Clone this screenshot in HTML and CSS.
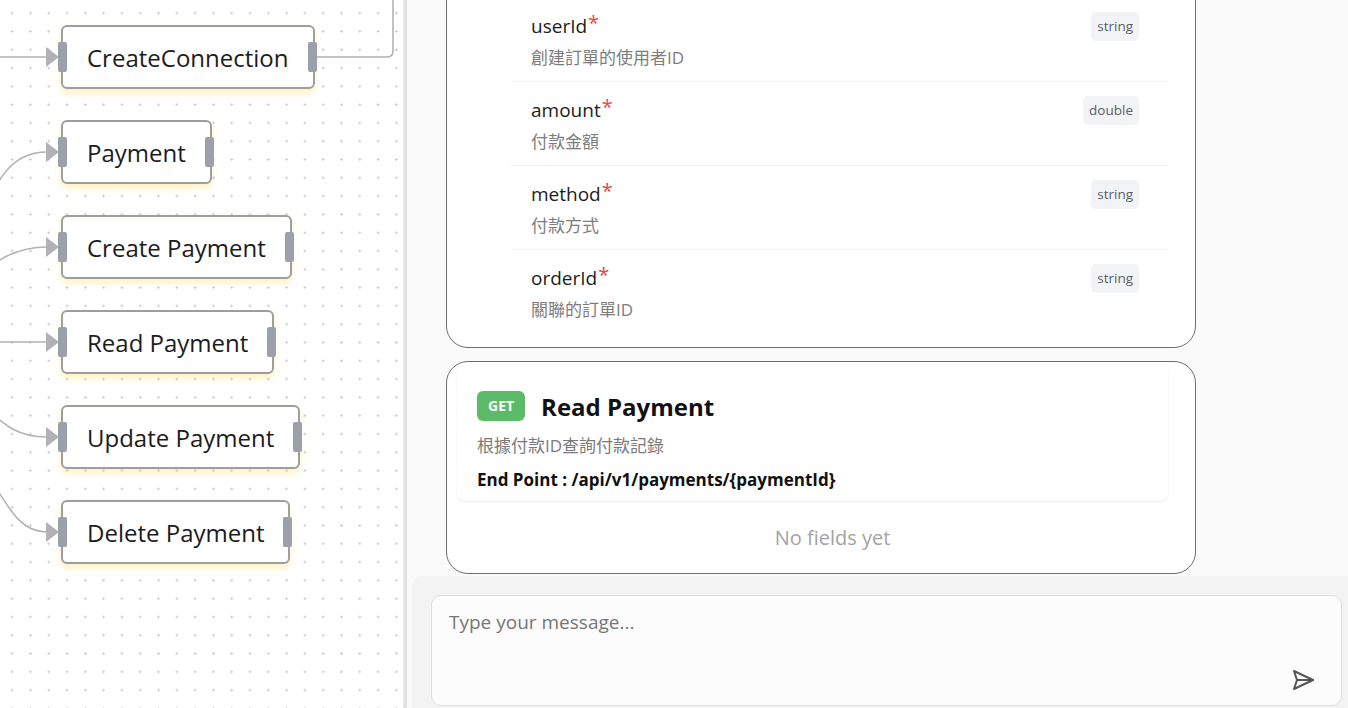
FILE: index.html
```html
<!DOCTYPE html>
<html>

	<head>
		<meta charset="UTF-8">
		<title>API Flow</title>
		<link rel="stylesheet" href="styles.css">
	</head>

	<body>
		<div class="app">
			<div class="canvas">
				<svg class="edges" width="403" height="708" viewBox="0 0 403 708">
					<g fill="none" stroke="#b1b1b7" stroke-width="1.6">
						<path d="M0 57 L47 57" />
						<path d="M315 57 L387 57 Q393 57 393 51 L393 -10" />
						<path d="M-25 235 C-5 180, 10 152, 47 152" />
						<path d="M-40 290 C-5 260, 15 247, 47 247" />
						<path d="M0 342 L47 342" />
						<path d="M-30 395 C5 425, 15 437, 47 437" />
						<path d="M-15 470 C10 510, 20 532, 47 532" />
					</g>
					<g fill="#b1b1b7">
						<polygon points="46,47 59,57 46,67" />
						<polygon points="46,142 59,152 46,162" />
						<polygon points="46,237 59,247 46,257" />
						<polygon points="46,332 59,342 46,352" />
						<polygon points="46,427 59,437 46,447" />
						<polygon points="46,522 59,532 46,542" />
					</g>
				</svg>
				<div class="nodes">
					<div class="node"><span class="handle left"></span>CreateConnection<span class="handle right"></span></div>
					<div class="node"><span class="handle left"></span>Payment<span class="handle right"></span></div>
					<div class="node"><span class="handle left"></span>Create Payment<span class="handle right"></span></div>
					<div class="node"><span class="handle left"></span>Read Payment<span class="handle right"></span></div>
					<div class="node"><span class="handle left"></span>Update Payment<span class="handle right"></span></div>
					<div class="node"><span class="handle left"></span>Delete Payment<span class="handle right"></span></div>
				</div>
			</div>
			<div class="divider"></div>
			<div class="panel">
				<div class="messages">
					<div class="api-card fields-card">
						<ul class="fields">
							<li>
								<div>
									<div class="field-name">userId<span class="req">*</span></div>
									<div class="field-desc">創建訂單的使用者ID</div>
								</div>
								<span class="type">string</span>
							</li>
							<li>
								<div>
									<div class="field-name">amount<span class="req">*</span></div>
									<div class="field-desc">付款金額</div>
								</div>
								<span class="type">double</span>
							</li>
							<li>
								<div>
									<div class="field-name">method<span class="req">*</span></div>
									<div class="field-desc">付款方式</div>
								</div>
								<span class="type">string</span>
							</li>
							<li>
								<div>
									<div class="field-name">orderId<span class="req">*</span></div>
									<div class="field-desc">關聯的訂單ID</div>
								</div>
								<span class="type">string</span>
							</li>
						</ul>
					</div>
					<div class="api-card">
						<div class="api-head">
							<div class="api-title">
								<span class="method get">GET</span>
								<h2>Read Payment</h2>
							</div>
							<p class="api-desc">根據付款ID查詢付款記錄</p>
							<p class="api-endpoint">End Point : /api/v1/payments/{paymentId}</p>
						</div>
						<div class="empty">No fields yet</div>
					</div>
				</div>
				<div class="composer">
					<div class="input-box">
						<span class="placeholder">Type your message...</span>
						<button class="send" type="button">
							<svg width="24" height="24" viewBox="0 0 24 24" fill="none" stroke="#555" stroke-width="2" stroke-linecap="round" stroke-linejoin="round">
								<path d="m3 3 3 9-3 9 19-9Z" />
								<path d="M6 12h16" />
							</svg>
						</button>
					</div>
				</div>
			</div>
		</div>
	</body>

</html>
```

FILE: styles.css
```css
* {
	margin: 0;
	padding: 0;
	box-sizing: border-box;
}

body {
	width: 1348px;
	height: 708px;
	overflow: hidden;
	font-family: "Open Sans", "Noto Sans CJK TC", sans-serif;
	color: #1c1c1c;
	background: #fafafa;
}

.app {
	display: flex;
	height: 708px;
}

/* flow canvas */

.canvas {
	position: relative;
	width: 403px;
	flex-shrink: 0;
	background-color: #fff;
	background-image: radial-gradient(circle, #c6c6c6 0.9px, transparent 1.3px);
	background-size: 18.3px 18.3px;
	background-position: 3px 4px;
	overflow: hidden;
}

.edges {
	position: absolute;
	left: 0;
	top: 0;
}

.nodes {
	position: relative;
	display: flex;
	flex-direction: column;
	align-items: flex-start;
	gap: 31px;
	padding: 25px 0 0 61px;
}

.node {
	position: relative;
	height: 64px;
	display: flex;
	align-items: center;
	padding: 0 24px;
	background: #fff;
	border: 2px solid #9e9e9e;
	border-radius: 6px;
	box-shadow: 0 4px 7px rgba(250, 204, 21, 0.28);
	font-size: 24px;
	white-space: nowrap;
}

.handle {
	position: absolute;
	top: 15px;
	width: 9px;
	height: 30px;
	background: #9ba1ab;
	border-radius: 2px;
}

.handle.left {
	left: -5px;
}

.handle.right {
	right: -4px;
}

.divider {
	width: 4px;
	flex-shrink: 0;
	background: linear-gradient(to right, #e9e9e9, #dcdcdc);
}

/* right panel */

.panel {
	flex: 1;
	display: flex;
	flex-direction: column;
	min-width: 0;
}

.messages {
	flex: 1;
	display: flex;
	flex-direction: column;
	justify-content: flex-end;
	gap: 13px;
	padding: 0 0 2px 39px;
	overflow: hidden;
}

.api-card {
	width: 750px;
	flex-shrink: 0;
	padding: 0 27px 0 10px;
	background: #fff;
	border: 1px solid #6e6e6e;
	border-radius: 22px;
}

.fields-card {
	padding-top: 40px;
	padding-bottom: 14px;
}

.api-head {
	padding: 29px 20px 9px 20px;
	border-radius: 8px;
	box-shadow: 0 1px 2px rgba(0, 0, 0, 0.08);
}

.api-title {
	display: flex;
	align-items: center;
	gap: 16px;
	height: 30px;
}

.method {
	display: inline-block;
	height: 30px;
	padding: 0 11px;
	border-radius: 6px;
	color: #fff;
	font-size: 14px;
	font-weight: 700;
	line-height: 30px;
}

.method.get {
	background: #5cbb67;
}

.api-title h2 {
	font-size: 24px;
	font-weight: 700;
	color: #111;
}

.api-desc {
	margin-top: 13px;
	font-size: 17px;
	line-height: 24px;
	color: #7a7a7a;
}

.api-endpoint {
	margin-top: 10px;
	font-size: 17px;
	line-height: 24px;
	font-weight: 700;
	color: #111;
}

.fields {
	list-style: none;
	margin-left: 54px;
}

.fields li {
	display: flex;
	justify-content: space-between;
	align-items: flex-start;
	padding: 14px 29px 11px 20px;
	border-top: 1px solid #efefef;
}

.field-name {
	font-size: 19px;
	line-height: 28px;
	font-weight: 500;
	color: #1c1c1c;
}

.req {
	margin-left: 1px;
	color: #e5484d;
	font-size: 20px;
	position: relative;
	top: -3px;
}

.field-desc {
	margin-top: 6px;
	font-size: 17px;
	line-height: 24px;
	color: #7d7d7d;
}

.type {
	height: 29px;
	padding: 0 6px;
	border-radius: 5px;
	background: #f2f3f5;
	color: #5b5f66;
	font-size: 13.5px;
	line-height: 29px;
}

.empty {
	padding: 23px 0 21px 40px;
	text-align: center;
	font-size: 20px;
	line-height: 28px;
	color: #a3a3a3;
}

/* message input */

.composer {
	height: 132px;
	flex-shrink: 0;
	margin-left: 5px;
	padding: 19px 6px 2px 19px;
	background: #f3f3f3;
	border-top-left-radius: 10px;
}

.input-box {
	height: 111px;
	display: flex;
	justify-content: space-between;
	padding: 13px 26px 13px 17px;
	background: #fcfcfc;
	border: 1.5px solid #dedede;
	border-radius: 10px;
}

.placeholder {
	font-size: 19px;
	line-height: 26px;
	color: #767676;
}

.send {
	align-self: flex-end;
	display: flex;
	border: none;
	background: none;
	cursor: pointer;
}
```
